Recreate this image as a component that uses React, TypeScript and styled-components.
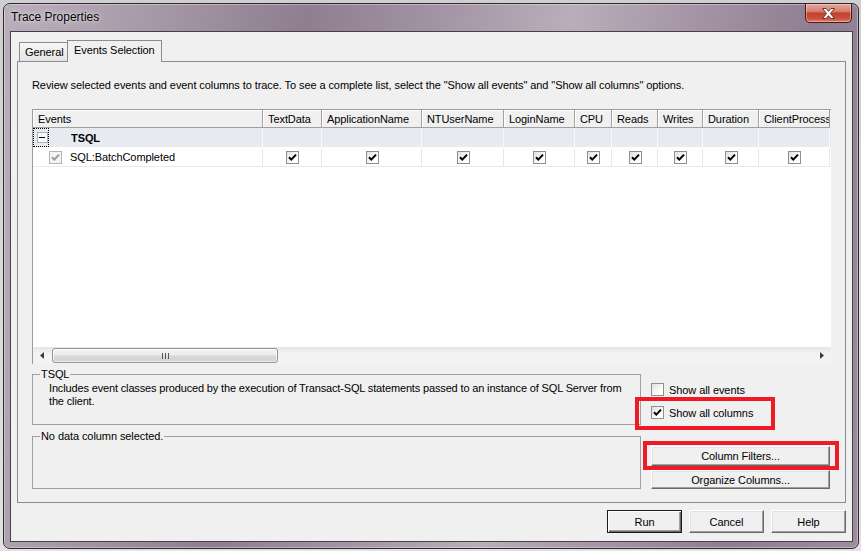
import React from 'react';
import styled, { createGlobalStyle, css } from 'styled-components';

const GlobalStyle = createGlobalStyle`
  html, body { margin: 0; padding: 0; }
  body {
    width: 861px; height: 551px; overflow: hidden;
    background: #d9d9d9;
    font-family: "Liberation Sans", Arial, sans-serif;
    font-size: 11px; color: #000;
    letter-spacing: -0.08px;
  }
  * { box-sizing: border-box; }
`;

const COLS = [230, 59, 100, 82, 71, 37, 46, 45, 56, 71];
const TEMPLATE = COLS.map((w) => `${w}px`).join(' ');
const HEADERS = ['Events', 'TextData', 'ApplicationName', 'NTUserName', 'LoginName', 'CPU', 'Reads', 'Writes', 'Duration', 'ClientProcess'];

const Desktop = styled.div`
  width: 861px; height: 551px;
  padding: 3px 2px 2px 3px;
  background: linear-gradient(180deg, #cfcfcf, #e2e2e2);
`;

const Window = styled.div`
  width: 856px; height: 546px;
  border: 1px solid #2f2731;
  border-radius: 7px;
  padding: 0 5px 6px 6px;
  display: flex; flex-direction: column;
  background: linear-gradient(100deg, #b9afba 0%, #a99caa 14%, #8e7e90 32%, #a394a5 46%, #b9aeb9 60%, #a696a7 72%, #8f7e91 86%, #9d8c9f 100%);
  box-shadow: inset 0 0 0 1px rgba(255,255,255,0.35);
`;

const TitleBar = styled.div`
  height: 27px;
  display: flex; justify-content: space-between; align-items: flex-start;
  padding-right: 1px;
`;

const Title = styled.div`
  padding: 6px 0 0 1px;
  font-family: "Liberation Sans", Arial, sans-serif;
  font-size: 12px; line-height: 15px;
  letter-spacing: 0;
  color: #000;
  text-shadow: 0 0 6px rgba(255,255,255,0.8), 0 0 2px rgba(255,255,255,0.6);
`;

const CloseButton = styled.div`
  width: 47px; height: 19px;
  border: 1px solid #4a1912;
  border-top: none;
  border-radius: 0 0 5px 5px;
  background: linear-gradient(180deg, #e3a89b 0%, #d7806f 40%, #c2412c 52%, #c9503c 80%, #e0836a 100%);
  box-shadow: inset 0 0 0 1px rgba(255,255,255,0.35);
  display: flex; align-items: center; justify-content: center;
`;

const Client = styled.div`
  flex: 1;
  border: 1px solid #464046;
  background: #f0f0f0;
  display: flex; flex-direction: column;
`;

const TabArea = styled.div`
  padding: 8px 6px 0;
  display: flex; flex-direction: column;
`;

const TabStrip = styled.div`
  height: 21px;
  padding-left: 2px;
  display: flex; align-items: flex-end;
  position: relative; z-index: 1;
`;

const Tab = styled.div<{ $active?: boolean; $width: number }>`
  width: ${(p) => p.$width}px;
  border: 1px solid #898c95;
  border-bottom: none;
  white-space: nowrap;
  ${(p) =>
    p.$active
      ? css`
          height: 22px;
          margin-bottom: -1px;
          padding: 3px 0 0 6px;
          background: #f0f0f0;
        `
      : css`
          height: 19px;
          padding: 3px 0 0 5px;
          border-right: none;
          background: linear-gradient(180deg, #f6f6f6, #e4e4e4);
        `}
`;

const Panel = styled.div`
  height: 442px;
  border: 1px solid #898c95;
  background: #f0f0f0;
  padding: 16px 14px 0;
  display: flex; flex-direction: column;
`;

const Description = styled.div`
  line-height: 14px;
  margin-bottom: 17px;
  white-space: nowrap;
`;

const Grid = styled.div`
  height: 255px;
  border-left: 1px solid #9b9b9b;
  border-top: 1px solid #9b9b9b;
  display: flex; flex-direction: column;
`;

const HeaderRow = styled.div`
  display: grid;
  grid-template-columns: ${TEMPLATE};
  height: 18px;
  background: #f0f0f0;
`;

const HeaderCell = styled.div`
  border-right: 1px solid #a0a0a0;
  border-bottom: 1px solid #a0a0a0;
  box-shadow: inset 1px 1px 0 #ffffff;
  padding: 2px 0 0 5px;
  line-height: 15px;
  overflow: hidden;
  white-space: nowrap;
`;

const BodyRow = styled.div<{ $group?: boolean }>`
  display: grid;
  grid-template-columns: ${TEMPLATE};
  height: ${(p) => (p.$group ? 20 : 19)}px;
  background: ${(p) => (p.$group ? '#e7ebf0' : '#ffffff')};
  border-bottom: 1px solid ${(p) => (p.$group ? '#ffffff' : '#eaeaea')};
`;

const BodyCell = styled.div<{ $group?: boolean }>`
  border-right: 1px solid ${(p) => (p.$group ? '#f7f9fb' : '#e8e8e8')};
  display: flex; align-items: center; justify-content: center;
  padding-left: 1px;
`;

const EventCell = styled.div<{ $group?: boolean }>`
  border-right: 1px solid ${(p) => (p.$group ? '#f7f9fb' : '#e8e8e8')};
  display: flex; align-items: center;
`;

const Toggle = styled.div`
  width: 16px; height: 19px;
  border: 1px dotted #000;
  display: flex; align-items: center;
  padding-left: 3px;
`;

const Indent = styled.span`
  width: 16px;
`;

const GroupLabel = styled.span`
  font-weight: bold;
  margin-left: 22px;
`;

const EventLabel = styled.span`
  margin-left: 8px;
`;

const Filler = styled.div`
  flex: 1;
  background: #ffffff;
`;

const HScroll = styled.div`
  height: 17px;
  display: flex; align-items: center;
  background: linear-gradient(180deg, #e6e6e6, #f3f3f3 40%, #f3f3f3);
  padding-right: 1px;
`;

const ScrollArrow = styled.div`
  width: 17px; height: 17px;
  display: flex; align-items: center; justify-content: center;
`;

const Thumb = styled.div`
  width: 226px; height: 15px;
  margin-left: 2px;
  border: 1px solid #959595;
  border-radius: 3px;
  background: linear-gradient(180deg, #f5f5f5 0%, #ebebeb 45%, #d9d9d9 55%, #d2d2d2 100%);
  box-shadow: inset 0 0 0 1px rgba(255,255,255,0.6);
  display: flex; align-items: center; justify-content: center;
`;

const ScrollSpacer = styled.div`
  flex: 1;
`;

const Bottom = styled.div`
  display: flex; gap: 10px;
`;

const LeftCol = styled.div`
  width: 609px;
  display: flex; flex-direction: column;
`;

const GroupBox = styled.fieldset<{ $top: number; $padBottom: number }>`
  margin: ${(p) => p.$top}px 0 0 0;
  min-width: 0;
  border: 1px solid #a0a0a0;
  padding: 1px 8px ${(p) => p.$padBottom}px 16px;
`;

const Legend = styled.legend`
  margin-left: -9px;
  padding: 0 1px;
  line-height: 13px;
`;

const GroupText = styled.div`
  line-height: 13px;
  white-space: nowrap;
  letter-spacing: -0.15px;
`;

const RightCol = styled.div`
  width: 179px;
  padding-top: 19px;
  display: flex; flex-direction: column;
`;

const CheckRow = styled.label<{ $gap?: number }>`
  position: relative;
  height: 13px;
  margin-top: ${(p) => p.$gap ?? 0}px;
  display: flex; align-items: center; gap: 5px;
  white-space: nowrap;
`;

const Box = styled.span<{ $disabled?: boolean }>`
  width: 13px; height: 13px; flex: none;
  border: 1px solid ${(p) => (p.$disabled ? '#b4b4b4' : '#8e8f8f')};
  background: ${(p) => (p.$disabled ? '#f4f4f4' : 'linear-gradient(135deg, #e0e0e0, #ffffff 70%)')};
  display: flex; align-items: center; justify-content: center;
`;

const Highlight = styled.span<{ $l: number; $t: number; $w: number; $h: number }>`
  position: absolute;
  left: ${(p) => p.$l}px; top: ${(p) => p.$t}px;
  width: ${(p) => p.$w}px; height: ${(p) => p.$h}px;
  border: 4px solid #ed1c24;
  pointer-events: none;
`;

const ButtonWrap = styled.div<{ $gap?: number }>`
  position: relative;
  margin-top: ${(p) => p.$gap ?? 0}px;
`;

const PushButton = styled.button<{ $default?: boolean; $w?: number; $h?: number }>`
  width: ${(p) => (p.$w ? `${p.$w}px` : '100%')};
  height: ${(p) => p.$h ?? 23}px;
  margin: 0; padding: 0;
  font-family: "Liberation Sans", Arial, sans-serif;
  font-size: 11px; color: #000;
  letter-spacing: -0.08px;
  background: #f0f0f0;
  border-style: solid;
  border-width: 1px;
  border-color: #ffffff #696969 #696969 #ffffff;
  box-shadow: inset -1px -1px 0 #a0a0a0, inset 1px 1px 0 #e3e3e3;
  ${(p) =>
    p.$default &&
    css`
      border-color: #1a1a1a;
      box-shadow: inset 1px 1px 0 #ffffff, inset -1px -1px 0 #696969, inset -2px -2px 0 #a0a0a0;
    `}
`;

const Footer = styled.div`
  display: flex; justify-content: flex-end; gap: 7px;
  padding: 7px 6px 8px;
`;

const Check = ({ color = '#000' }: { color?: string }) => (
  <svg width="9" height="9" viewBox="0 0 9 9">
    <polyline points="1,4.2 3.3,6.6 8,1.6" fill="none" stroke={color} strokeWidth="2" />
  </svg>
);

const CheckBox = ({ checked, disabled }: { checked?: boolean; disabled?: boolean }) => (
  <Box $disabled={disabled}>{checked && <Check color={disabled ? '#9a9a9a' : '#000'} />}</Box>
);

const CloseGlyph = () => (
  <svg width="13" height="11" viewBox="0 0 13 11">
    <polygon
      points="0.5,0.5 4,0.5 6.5,3.3 9,0.5 12.5,0.5 8.4,5.5 12.5,10.5 9,10.5 6.5,7.7 4,10.5 0.5,10.5 4.6,5.5"
      fill="#ffffff"
      stroke="#5a2a22"
      strokeWidth="0.9"
    />
  </svg>
);

const ArrowLeft = () => (
  <svg width="4" height="7" viewBox="0 0 4 7">
    <polygon points="4,0 0,3.5 4,7" fill="#3a3a3a" />
  </svg>
);

const ArrowRight = () => (
  <svg width="4" height="7" viewBox="0 0 4 7">
    <polygon points="0,0 4,3.5 0,7" fill="#3a3a3a" />
  </svg>
);

const Grip = () => (
  <svg width="7" height="6" viewBox="0 0 7 6">
    <rect x="0" y="0" width="1" height="6" fill="#555" />
    <rect x="3" y="0" width="1" height="6" fill="#555" />
    <rect x="6" y="0" width="1" height="6" fill="#555" />
  </svg>
);

const Minus = () => (
  <svg width="11" height="11" viewBox="0 0 11 11">
    <rect x="0.5" y="0.5" width="10" height="10" fill="#fafafa" stroke="#b0b0b0" />
    <rect x="2" y="5" width="6" height="1" fill="#000" />
  </svg>
);

export default function App() {
  return (
    <>
      <GlobalStyle />
      <Desktop>
        <Window>
          <TitleBar>
            <Title>Trace Properties</Title>
            <CloseButton>
              <CloseGlyph />
            </CloseButton>
          </TitleBar>
          <Client>
            <TabArea>
              <TabStrip>
                <Tab $width={48}>General</Tab>
                <Tab $active $width={95}>Events Selection</Tab>
              </TabStrip>
              <Panel>
                <Description>
                  Review selected events and event columns to trace. To see a complete list, select the "Show all events" and "Show all columns" options.
                </Description>
                <Grid>
                  <HeaderRow>
                    {HEADERS.map((h) => (
                      <HeaderCell key={h}>{h}</HeaderCell>
                    ))}
                  </HeaderRow>
                  <BodyRow $group>
                    <EventCell $group>
                      <Toggle>
                        <Minus />
                      </Toggle>
                      <GroupLabel>TSQL</GroupLabel>
                    </EventCell>
                    {HEADERS.slice(1).map((h) => (
                      <BodyCell $group key={h} />
                    ))}
                  </BodyRow>
                  <BodyRow>
                    <EventCell>
                      <Indent />
                      <CheckBox checked disabled />
                      <EventLabel>SQL:BatchCompleted</EventLabel>
                    </EventCell>
                    {HEADERS.slice(1).map((h) => (
                      <BodyCell key={h}>
                        <CheckBox checked />
                      </BodyCell>
                    ))}
                  </BodyRow>
                  <Filler />
                  <HScroll>
                    <ScrollArrow>
                      <ArrowLeft />
                    </ScrollArrow>
                    <Thumb>
                      <Grip />
                    </Thumb>
                    <ScrollSpacer />
                    <ScrollArrow>
                      <ArrowRight />
                    </ScrollArrow>
                  </HScroll>
                </Grid>
                <Bottom>
                  <LeftCol>
                    <GroupBox $top={4} $padBottom={16}>
                      <Legend>TSQL</Legend>
                      <GroupText>
                        Includes event classes produced by the execution of Transact-SQL statements passed to an instance of SQL Server from
                        <br />
                        the client.
                      </GroupText>
                    </GroupBox>
                    <GroupBox $top={5} $padBottom={44}>
                      <Legend>No data column selected.</Legend>
                    </GroupBox>
                  </LeftCol>
                  <RightCol>
                    <CheckRow>
                      <CheckBox />
                      Show all events
                    </CheckRow>
                    <CheckRow $gap={10}>
                      <CheckBox checked />
                      Show all columns
                      <Highlight $l={-16} $t={-9} $w={140} $h={33} />
                    </CheckRow>
                    <ButtonWrap $gap={27}>
                      <PushButton $h={20}>Column Filters...</PushButton>
                      <Highlight $l={-8} $t={-5} $w={196} $h={29} />
                    </ButtonWrap>
                    <ButtonWrap $gap={4}>
                      <PushButton $h={19}>Organize Columns...</PushButton>
                    </ButtonWrap>
                  </RightCol>
                </Bottom>
              </Panel>
            </TabArea>
            <Footer>
              <PushButton $default $w={75}>Run</PushButton>
              <PushButton $w={75}>Cancel</PushButton>
              <PushButton $w={75}>Help</PushButton>
            </Footer>
          </Client>
        </Window>
      </Desktop>
    </>
  );
}
